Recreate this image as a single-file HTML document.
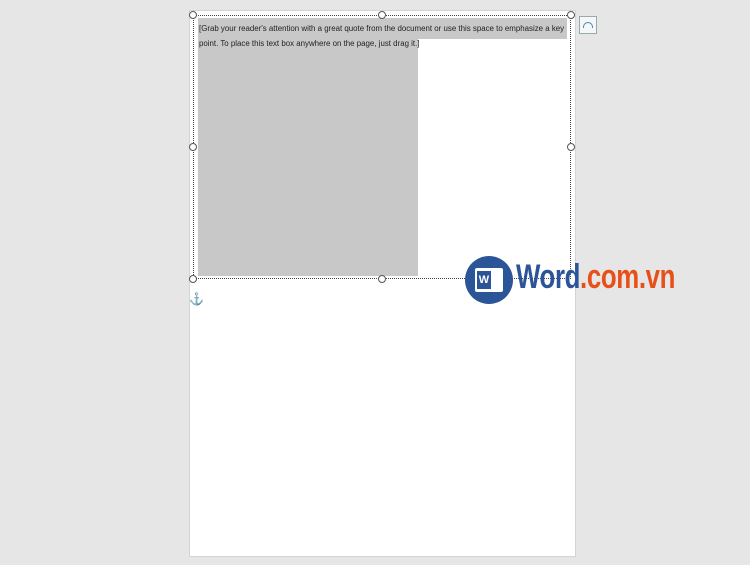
<!DOCTYPE html>
<html><head><style>
body{margin:0;width:750px;height:565px;background:#e6e6e6;position:relative;overflow:hidden;font-family:"Liberation Sans",sans-serif}
.a{position:absolute}
.h{position:absolute;width:6px;height:6px;border:1px solid #555;border-radius:50%;background:#fff}
.t{font-size:7.9px;color:#222;white-space:nowrap;line-height:15px}
</style></head><body>
<div class="a" style="left:189px;top:10px;width:387px;height:547px;background:#fff;border:1px solid #d4d4d4;box-sizing:border-box"></div>
<div class="a" style="left:198px;top:18px;width:369px;height:21px;background:#c8c8c8"></div>
<div class="a" style="left:198px;top:39px;width:220px;height:237px;background:#c8c8c8"></div>
<div class="a t" style="left:199px;top:21px">[Grab your reader's attention with a great quote from the document or use this space to emphasize a key</div>
<div class="a t" style="left:199px;top:36px">point. To place this text box anywhere on the page, just drag it.]</div>
<div class="a" style="left:193px;top:15px;width:378px;height:264px;border:1px dotted #444;box-sizing:border-box"></div>
<div class="h" style="left:189px;top:11px"></div>
<div class="h" style="left:378px;top:11px"></div>
<div class="h" style="left:567px;top:11px"></div>
<div class="h" style="left:189px;top:143px"></div>
<div class="h" style="left:567px;top:143px"></div>
<div class="h" style="left:189px;top:275px"></div>
<div class="h" style="left:378px;top:275px"></div>
<div class="a" style="left:579px;top:16px;width:18px;height:18px;border:1px solid #9aa;background:#f4f6f8;box-sizing:border-box"><div style="margin:5px 3px;height:5px;border:1px solid #4a7fb5;border-bottom:none;border-radius:5px 5px 0 0"></div></div>
<div class="a" style="left:189px;top:292px;color:#3a8fd8;font-size:12px">⚓</div>
<div class="a" style="left:465px;top:256px;width:48px;height:48px;border-radius:50%;background:#2b5597"></div>
<div class="a" style="left:475px;top:268px;width:28px;height:24px;background:#fff;border-radius:2px"></div>
<div class="a" style="left:477px;top:271px;width:14px;height:18px;background:#2b5597;color:#fff;font-size:11px;font-weight:bold;text-align:center;line-height:18px">W</div>
<div class="a" style="left:516px;top:258px;font-size:34px;font-weight:bold;letter-spacing:-0.5px;transform:scaleX(0.76);transform-origin:left;white-space:nowrap"><span style="color:#2b5597">Word</span><span style="color:#e8501a">.com.vn</span></div>
</body></html>
